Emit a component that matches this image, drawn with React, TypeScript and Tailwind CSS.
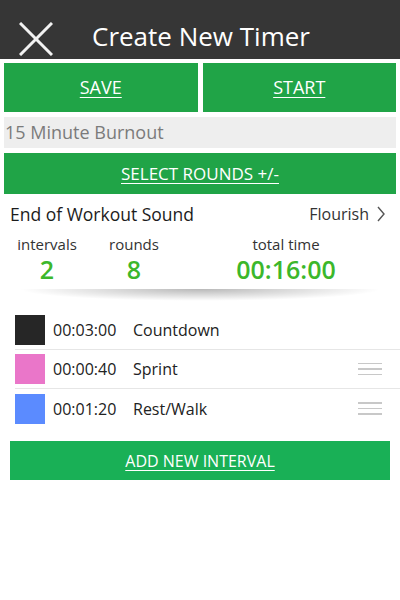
import React from "react";

const intervals = [
  { color: "bg-[#262626]", time: "00:03:00", name: "Countdown", handle: false },
  { color: "bg-[#ea76c9]", time: "00:00:40", name: "Sprint", handle: true },
  { color: "bg-[#5b8bff]", time: "00:01:20", name: "Rest/Walk", handle: true },
];

function Handle() {
  return (
    <div className="flex w-[24px] flex-col gap-[4px]">
      <div className="h-[1.5px] bg-[#c8c8c8]" />
      <div className="h-[1.5px] bg-[#c8c8c8]" />
      <div className="h-[1.5px] bg-[#c8c8c8]" />
    </div>
  );
}

export default function App() {
  return (
    <div className="h-[600px] w-[400px] overflow-hidden bg-white font-['Open_Sans',sans-serif]">
      {/* Header */}
      <div className="flex h-[59px] items-center bg-[#363636] text-white">
        <svg className="ml-[19px] mt-[18px] h-[34px] w-[34px]" viewBox="0 0 34 34" fill="none" stroke="#f2f2f2" strokeWidth={3}>
          <path d="M1 1l32 32M33 1L1 33" />
        </svg>
        <h1 className="ml-[39px] mt-[12px] text-[26px] leading-none">Create New Timer</h1>
      </div>

      {/* Save / Start */}
      <div className="mt-[4px] flex gap-[5px] px-[4px]">
        <button className="flex h-[49px] flex-1 items-center justify-center bg-[#20a447] text-[18px] text-white underline underline-offset-[3px]">
          SAVE
        </button>
        <button className="flex h-[49px] flex-1 items-center justify-center bg-[#20a447] text-[18px] text-white underline underline-offset-[3px]">
          START
        </button>
      </div>

      {/* Name */}
      <div className="mx-[4px] mt-[5px] flex h-[31px] items-center bg-[#eeeeee] px-[1px] text-[18px] text-[#7b7b7b]">
        15 Minute Burnout
      </div>

      <button className="mx-[4px] mt-[5px] flex h-[41px] w-[392px] items-center justify-center bg-[#20a447] text-[17px] text-white underline underline-offset-[3px]">
        SELECT ROUNDS +/-
      </button>

      {/* Sound */}
      <div className="mt-[6px] flex h-[28px] items-center justify-between pl-[10px] pr-[14px]">
        <span className="text-[17.5px] font-medium text-[#1c1c1c]">End of Workout Sound</span>
        <span className="flex items-center gap-[7px] text-[16px] text-[#333]">
          Flourish
          <svg className="h-[16px] w-[10px]" viewBox="0 0 10 16" fill="none" stroke="#555" strokeWidth={1.4}>
            <path d="M2 1l6 7-6 7" />
          </svg>
        </span>
      </div>

      {/* Stats */}
      <div className="mt-[6px] flex text-center">
        <div className="ml-[15px] w-[64px]">
          <div className="text-[15px] leading-[20px] text-[#333]">intervals</div>
          <div className="text-[25px] font-semibold leading-[30px] text-[#3cb72b]">2</div>
        </div>
        <div className="ml-[29px] w-[52px]">
          <div className="text-[15px] leading-[20px] text-[#333]">rounds</div>
          <div className="text-[25px] font-semibold leading-[30px] text-[#3cb72b]">8</div>
        </div>
        <div className="ml-[71px] w-[110px]">
          <div className="text-[15px] leading-[20px] text-[#333]">total time</div>
          <div className="text-[25px] font-semibold leading-[30px] text-[#3cb72b]">00:16:00</div>
        </div>
      </div>

      {/* Shadow */}
      <div className="mx-[18px] mt-[5px] h-[12px] bg-[radial-gradient(ellipse_at_top,rgba(0,0,0,0.28),rgba(0,0,0,0)_70%)]" />

      {/* Interval list */}
      <div className="mt-[10px] pl-[15px]">
        {intervals.map((it, i) => (
          <div
            key={it.time}
            className={`flex h-[39px] items-center pr-[18px] ${i < intervals.length - 1 ? "border-b border-[#e6e6e6]" : ""}`}
          >
            <div className={`h-[30px] w-[30px] ${it.color}`} />
            <span className="ml-[8px] w-[80px] text-[16px] text-[#222]">{it.time}</span>
            <span className="text-[16px] text-[#222]">{it.name}</span>
            <div className="ml-auto">{it.handle && <Handle />}</div>
          </div>
        ))}
      </div>

      <button className="mx-[10px] mt-[13px] flex h-[39px] w-[380px] items-center justify-center bg-[#19b056] text-[16px] text-white underline underline-offset-[3px]">
        ADD NEW INTERVAL
      </button>
    </div>
  );
}
